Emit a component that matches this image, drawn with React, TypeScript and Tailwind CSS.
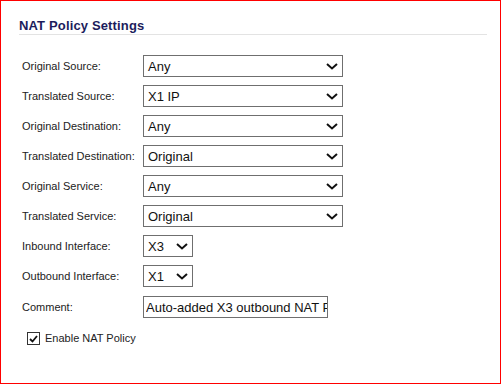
import React from "react";

const Chevron = () => (
  <svg width="12" height="7" viewBox="0 0 12 7" className="shrink-0">
    <path d="M1 1 L6 5.5 L11 1" fill="none" stroke="#111" strokeWidth="2" />
  </svg>
);

const Select = ({ value, w }: { value: string; w: string }) => (
  <div
    className={`${w} h-[22px] border border-[#6f6f6f] bg-white flex items-center justify-between pl-[4px] pr-[4px] text-[13px] text-[#111]`}
  >
    <span className="leading-none">{value}</span>
    <Chevron />
  </div>
);

const Row = ({ label, children, extra = "" }: { label: string; children: React.ReactNode; extra?: string }) => (
  <div className={`flex items-center h-[22px] ${extra}`}>
    <div className="w-[121px] text-[11px] text-[#222]">{label}</div>
    {children}
  </div>
);

export default function App() {
  return (
    <div
      className="w-[501px] h-[384px] border border-[#ff0000] bg-white overflow-hidden"
      style={{ fontFamily: '"Liberation Sans", Arial, sans-serif' }}
    >
      <div className="pl-[18px] pr-[13px] pt-[17px]">
        <div className="h-[17px] border-b border-[#e3e3e3] text-[13px] font-bold leading-[16px] text-[#1c1c5c] tracking-[0.15px]">
          NAT Policy Settings
        </div>
        <div className="mt-[20px] pl-[3px] flex flex-col gap-[8px]">
          <Row label="Original Source:">
            <Select value="Any" w="w-[200px]" />
          </Row>
          <Row label="Translated Source:">
            <Select value="X1 IP" w="w-[200px]" />
          </Row>
          <Row label="Original Destination:">
            <Select value="Any" w="w-[200px]" />
          </Row>
          <Row label="Translated Destination:">
            <Select value="Original" w="w-[200px]" />
          </Row>
          <Row label="Original Service:">
            <Select value="Any" w="w-[200px]" />
          </Row>
          <Row label="Translated Service:">
            <Select value="Original" w="w-[200px]" />
          </Row>
          <Row label="Inbound Interface:">
            <Select value="X3" w="w-[50px]" />
          </Row>
          <Row label="Outbound Interface:">
            <Select value="X1" w="w-[50px]" />
          </Row>
          <Row label="Comment:" extra="mt-[1px]">
            <input
              readOnly
              value="Auto-added X3 outbound NAT Policy"
              className="w-[185px] h-[22px] border border-[#6f6f6f] bg-white pl-[2px] pr-0 text-[13px] text-[#111] outline-none"
              style={{ fontFamily: '"Liberation Sans", Arial, sans-serif' }}
            />
          </Row>
          <div className="mt-[6px] pl-[5px] flex items-center h-[13px]">
            <div className="w-[13px] h-[13px] border border-[#333] bg-white flex items-center justify-center">
              <svg width="9" height="8" viewBox="0 0 9 8">
                <path d="M1 4 L3.5 6.5 L8 1" fill="none" stroke="#111" strokeWidth="1.8" />
              </svg>
            </div>
            <span className="ml-[5px] text-[11px] text-[#222]">Enable NAT Policy</span>
          </div>
        </div>
      </div>
    </div>
  );
}
